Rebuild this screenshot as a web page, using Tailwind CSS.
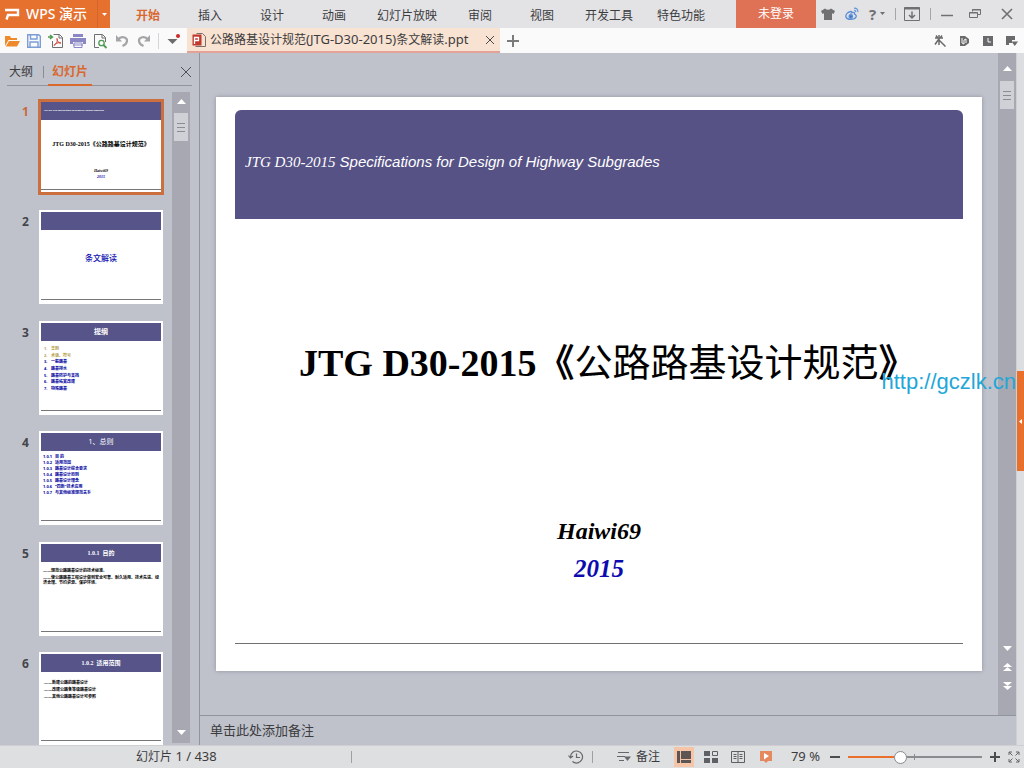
<!DOCTYPE html>
<html lang="zh-CN">
  <head>
    <meta charset="UTF-8" />
    <meta name="viewport" content="width=device-width, initial-scale=1.0" />
    <title>WPS 演示</title>
    <script src="https://cdn.jsdelivr.net/npm/@tailwindcss/browser@4"></script>
  </head>
  <body
    class="flex h-screen flex-col overflow-hidden bg-[#bfc2cb] font-['Noto_Sans','Noto_Sans_CJK_SC',sans-serif] text-xs text-[#3c3c3e]"
  >
    <!-- Title bar -->
    <header class="flex h-7 shrink-0 bg-[#e3e3e6]">
      <button class="flex w-[110px] shrink-0 items-center bg-[#e6702e] text-white">
        <svg class="ml-1 h-5 w-5 shrink-0" viewBox="0 0 20 20" fill="none" stroke="#fff" stroke-width="2.400"><path d="M1 6h13v5H4L2.500 15.500" /></svg>
        <span class="ml-0.5 flex-1 text-left text-sm font-medium whitespace-nowrap">WPS 演示</span>
        <span class="flex h-full w-[13px] items-center justify-center border-l border-[#d8662a]">
          <svg class="h-[3px] w-[5px]" viewBox="0 0 5 3" fill="#fff"><path d="M0 0h5L2.500 3z" /></svg>
        </span>
      </button>
      <nav class="ml-[7px] flex flex-1 items-center pt-1">
        <a href="#" class="min-w-[62px] px-3 text-center font-bold whitespace-nowrap text-[#d9682f]">开始</a>
        <a href="#" class="min-w-[62px] px-3 text-center whitespace-nowrap">插入</a>
        <a href="#" class="min-w-[62px] px-3 text-center whitespace-nowrap">设计</a>
        <a href="#" class="min-w-[62px] px-3 text-center whitespace-nowrap">动画</a>
        <a href="#" class="min-w-[62px] px-3 text-center whitespace-nowrap">幻灯片放映</a>
        <a href="#" class="min-w-[62px] px-3 text-center whitespace-nowrap">审阅</a>
        <a href="#" class="min-w-[62px] px-3 text-center whitespace-nowrap">视图</a>
        <a href="#" class="min-w-[62px] px-3 text-center whitespace-nowrap">开发工具</a>
        <a href="#" class="min-w-[62px] px-3 text-center whitespace-nowrap">特色功能</a>
      </nav>
      <button class="w-20 shrink-0 bg-[#df7254] text-white">未登录</button>
      <div class="flex w-52 shrink-0 items-center text-[#707072]">
        <button class="ml-[5px]" aria-label="皮肤">
          <svg class="h-3.5 w-3.5" viewBox="0 0 14 14" fill="currentColor"><path d="M4 1.500q3 2.500 6 0L14 4l-1.500 3L11 6.300V13H3V6.300L1.500 7 0 4z" /></svg>
        </button>
        <button class="ml-2.5" aria-label="微博">
          <svg class="h-3.5 w-3.5" viewBox="0 0 14 14" fill="none" stroke="#5d8fd6" stroke-width="1.400"><path d="M5.500 4.500C2 5.500.5 8 1 10c.8 3 8.500 3.200 10 0 .7-1.700-.6-2.500-1.500-2.800.5-2-1-2.200-3-1.400.3-.9.200-1.800-1-1.300z" /><circle cx="5.800" cy="9.500" r="1.700" fill="#3f76c8" /><path d="M9 1.200c2.500-.4 4.300 1.500 3.900 4M9.200 3.400c1.200-.1 1.800.6 1.600 1.700" stroke-width="1.100" /></svg>
        </button>
        <button class="ml-2.5 flex items-center gap-1" aria-label="帮助">
          <span class="text-[15px] font-bold">?</span>
          <svg class="h-[3px] w-[5px]" viewBox="0 0 5 3" fill="currentColor"><path d="M0 0h5L2.500 3z" /></svg>
        </button>
        <span class="ml-2.5 h-3 w-px bg-[#a5a5a8]"></span>
        <button class="ml-2" aria-label="隐藏功能区">
          <svg class="h-4 w-4" viewBox="0 0 16 16" fill="none" stroke="currentColor"><path d="M.5 1.500h15v13H.5z" /><path d="M0 2.500h16" stroke-width="2" /><path d="M8 5.500V12M5 9l3 3 3-3" stroke-width="1.500" /></svg>
        </button>
        <span class="ml-2.5 h-3 w-px bg-[#a5a5a8]"></span>
        <button class="ml-2.5" aria-label="最小化">
          <svg class="h-3 w-3" viewBox="0 0 12 12" stroke="currentColor" stroke-width="1.500"><path d="M0 7.500h12" /></svg>
        </button>
        <button class="ml-4" aria-label="还原">
          <svg class="h-3 w-3" viewBox="0 0 12 12" fill="none" stroke="currentColor"><path d="M3.500 3.500v-2h8v5h-3M.5 4.500h8v5h-8zM3 2h9M0 5h9" /></svg>
        </button>
        <button class="ml-5" aria-label="关闭">
          <svg class="h-3 w-3" viewBox="0 0 12 12" stroke="currentColor" stroke-width="1.600"><path d="M1 1l10 10M11 1L1 11" /></svg>
        </button>
      </div>
    </header>

    <!-- Quick access + document tabs -->
    <div class="flex h-[25px] shrink-0 items-center bg-[#fafafa]">
      <div class="flex w-[187px] shrink-0 items-center gap-[6px] pl-1">
        <button aria-label="打开">
          <svg class="h-4 w-4" viewBox="0 0 16 16" fill="#ee8a2c"><path d="M1 13V3h5l1 2h6v2H4.500z" /><path d="M5 8h11l-3 5.500H1.800z" /></svg>
        </button>
        <button aria-label="保存">
          <svg class="h-4 w-4" viewBox="0 0 16 16" fill="none" stroke="#7b9cd6" stroke-width="1.400"><path d="M1.700 1.700h11l1.600 1.600v11H1.700zM4.500 2v4h6.500V2M4 14V9h8v5" /></svg>
        </button>
        <button aria-label="输出为PDF">
          <svg class="h-4 w-4" viewBox="0 0 16 16" fill="none"><path d="M5.500 1.500h6l3 3v10h-10V8" stroke="#6f6f72" /><path d="M11 1.500V5h3.500" stroke="#6f6f72" /><path d="M9 5.500c1 3-.8 5.500-3 7 1-2 4-3.500 7-2.500-2.500.3-4-2-4-4.500z" stroke="#d04338" /><path d="M0 4h4M2 2l2.500 2L2 6" stroke="#4c9a50" stroke-width="1.400" /></svg>
        </button>
        <button aria-label="打印">
          <svg class="h-4 w-4" viewBox="0 0 16 16" fill="#8b87c4"><path d="M3 1h10v3H3zM0 5h16v6h-3V9H3v2H0z" /><path d="M4 10h8v4.500H4z" fill="#fff" stroke="#8b87c4" /><path d="M3 12h10" stroke="#8b87c4" /></svg>
        </button>
        <button aria-label="打印预览">
          <svg class="h-4 w-4" viewBox="0 0 16 16" fill="none"><path d="M7 14.500H2.500v-13h8l3 3V9M10 1.500V5h3.500" stroke="#6f6f72" /><circle cx="9.500" cy="10" r="2.700" stroke="#4f9a55" stroke-width="1.300" /><path d="M11.500 12l3 3" stroke="#4f9a55" stroke-width="1.800" /></svg>
        </button>
        <button aria-label="撤销">
          <svg class="h-4 w-4" viewBox="0 0 16 16" fill="none" stroke="#a5a5a8" stroke-width="2.200"><path d="M4 6.500c3-4 9.500-2.500 9 1.500-.3 2.500-2 4-4.500 5" /><path d="M2 2v6.500h6z" fill="#a5a5a8" stroke="none" /></svg>
        </button>
        <button aria-label="恢复">
          <svg class="h-4 w-4" viewBox="0 0 16 16" fill="none" stroke="#a5a5a8" stroke-width="2.200"><path d="M12 6.500c-3-4-9.500-2.500-9 1.500.3 2.500 2 4 4.500 5" /><path d="M14 2v6.500H8z" fill="#a5a5a8" stroke="none" /></svg>
        </button>
        <span class="h-4 w-px bg-[#d5d5d8]"></span>
        <button aria-label="自定义快速访问工具栏">
          <svg class="h-4 w-4" viewBox="0 0 16 16"><path d="M2.500 6h10L7.500 11z" fill="#6c6c6e" /><circle cx="13" cy="3" r="2" fill="#c92a2a" /></svg>
        </button>
      </div>
      <div class="flex h-full w-[313px] shrink-0 items-center border-b-2 border-[#e2a297] bg-[#f8e2d2]">
        <svg class="ml-1 h-4 w-4 shrink-0" viewBox="0 0 16 16" fill="none"><path d="M5.500 1.500h6l3 3v10h-10" stroke="#7a6f6c" /><path d="M1.500 2.500h9v11h-9z" fill="#c0392f" /><path d="M3.500 12V5.500h4v3H4" stroke="#fff" stroke-width="1.300" /></svg>
        <span class="ml-[3px] flex-1 whitespace-nowrap">公路路基设计规范<span class="text-[13px]">(JTG-D30-2015)</span>条文解读<span class="text-[13px]">.ppt</span></span>
        <button class="mr-1.5" aria-label="关闭文档">
          <svg class="h-2 w-2" viewBox="0 0 8 8" stroke="#4a4a4c"><path d="M0 0l8 8M8 0L0 8" /></svg>
        </button>
      </div>
      <button class="ml-[7px]" aria-label="新建">
        <svg class="h-3 w-3" viewBox="0 0 12 12" stroke="#7b7b7e" stroke-width="2"><path d="M6 0v12M0 6h12" /></svg>
      </button>
      <div class="ml-auto flex items-center gap-3 pr-1.5 text-[#6a6a6d]">
        <button aria-label="动画"><svg class="h-3 w-3" viewBox="0 0 12 12" fill="none" stroke="currentColor" stroke-width="1.500"><path d="M5 0v6M1 3h8M4.500 4.500L1 9.500M2 .5l1.500 2M8 .5L6.500 2.500M5 5l6.500 6.500M5 6v4" /></svg></button>
        <button aria-label="文档"><svg class="h-3 w-3" viewBox="0 0 12 12"><path d="M2 1h5l4 3v4L7 11H2z" fill="currentColor" /><path d="M4 3v5l2 1V5l2-1v4" stroke="#fafafa" fill="none" /></svg></button>
        <button aria-label="历史"><svg class="h-3 w-3" viewBox="0 0 12 12"><path d="M1 1h10v10H1z" fill="currentColor" /><path d="M6 3v4h3" stroke="#fafafa" fill="none" /></svg></button>
        <button aria-label="更多"><svg class="h-3 w-3" viewBox="0 0 12 12" fill="currentColor"><path d="M0 1h9v4H6v3H3v2H0zM5.500 6.500H12L8.800 11z" /></svg></button>
      </div>
    </div>

    <main class="flex min-h-0 flex-1">
      <!-- Slide panel -->
      <aside class="flex w-[200px] shrink-0 flex-col border-r border-[#92949c]">
        <div class="mr-[7px] ml-[7px] flex h-[33px] shrink-0 items-center border-b border-[#92949c]">
          <a href="#" class="px-0.5 pt-1.5">大纲</a>
          <span class="mt-1.5 ml-2 h-3 w-px bg-[#8a8c94]"></span>
          <a href="#" class="-mb-px ml-1 flex h-[33px] items-center border-b-2 border-[#d9682f] px-1 pt-1.5 font-bold text-[#d9682f]">幻灯片</a>
          <button class="mt-1.5 mr-px ml-auto" aria-label="关闭窗格">
            <svg class="h-2.5 w-2.5" viewBox="0 0 10 10" stroke="#4f5056"><path d="M0 0l10 10M10 0L0 10" /></svg>
          </button>
        </div>
        <div class="flex min-h-0 flex-1 pt-[6px]">
          <ol class="min-h-0 flex-1 overflow-hidden pt-2 text-[#45464b]">
            <li class="flex odd:h-[110px] even:h-[111px]">
              <span class="w-[39px] pt-1 pl-[22px] font-bold text-[#c96a3c]">1</span>
              <div class="flex h-[94px] w-[124px] flex-col bg-white p-0.5 outline-3 -outline-offset-2 outline-[#cb6f3f]">
                <div class="h-[18px] shrink-0 bg-[#565488] px-[3px] pt-1.5 font-['Liberation_Sans',sans-serif] text-[2px] leading-[4px] font-bold text-white italic">JTG D30-2015 Specifications for Design of Highway Subgrades</div>
                <p class="mt-5 text-center font-['Liberation_Serif','Noto_Sans_CJK_SC',serif] text-[6px] leading-[8px] font-bold whitespace-nowrap text-black">JTG D30-2015《公路路基设计规范》</p>
                <p class="mt-5 text-center font-['Liberation_Serif',serif] text-[4px] leading-[6px] font-bold text-black italic">Haiwi69</p>
                <p class="text-center font-['Liberation_Serif',serif] text-[4px] leading-[6px] font-bold text-[#0e0eb0] italic">2015</p>
                <div class="mt-auto mb-0.5 h-px bg-[#77777a]"></div>
              </div>
            </li>
            <li class="flex odd:h-[110px] even:h-[111px]">
              <span class="w-[39px] pt-1 pl-[22px] font-bold">2</span>
              <div class="flex h-[94px] w-[124px] flex-col bg-white p-0.5">
                <div class="h-[18px] shrink-0 bg-[#565488]"></div>
                <p class="mt-[22px] text-center text-[8px] leading-[12px] font-medium text-[#0e0eb0]">条文解读</p>
                <div class="mt-auto mb-0.5 h-px bg-[#77777a]"></div>
              </div>
            </li>
            <li class="flex odd:h-[110px] even:h-[111px]">
              <span class="w-[39px] pt-1 pl-[22px] font-bold">3</span>
              <div class="flex h-[94px] w-[124px] flex-col bg-white p-0.5">
                <div class="h-[18px] shrink-0 bg-[#565488] text-center text-[7px] leading-[18px] font-bold text-white">提纲</div>
                <div class="mt-[5px] flex h-[46px] flex-col justify-between pl-[3px] text-[4px] leading-[6px] font-bold text-[#0000a0]">
                  <p class="flex text-[#b59b4a]"><span class="w-[7px]">1.</span>总则</p>
                  <p class="flex text-[#b59b4a]"><span class="w-[7px]">2.</span>术语、符号</p>
                  <p class="flex"><span class="w-[7px]">3.</span>一般路基</p>
                  <p class="flex"><span class="w-[7px]">4.</span>路基排水</p>
                  <p class="flex"><span class="w-[7px]">5.</span>路基防护与支挡</p>
                  <p class="flex"><span class="w-[7px]">6.</span>路基拓宽改建</p>
                  <p class="flex"><span class="w-[7px]">7.</span>特殊路基</p>
                </div>
                <div class="mt-auto mb-0.5 h-px bg-[#77777a]"></div>
              </div>
            </li>
            <li class="flex odd:h-[110px] even:h-[111px]">
              <span class="w-[39px] pt-1 pl-[22px] font-bold">4</span>
              <div class="flex h-[94px] w-[124px] flex-col bg-white p-0.5">
                <div class="h-[18px] shrink-0 bg-[#565488] text-center text-[7px] leading-[18px] text-white">1、总则</div>
                <div class="mt-[3px] flex flex-col pl-0.5 text-[4px] leading-[6px] font-bold text-[#0000a0]">
                  <p class="flex"><span class="w-3">1.0.1</span>目 的</p>
                  <p class="flex"><span class="w-3">1.0.2</span>适用范围</p>
                  <p class="flex"><span class="w-3">1.0.3</span>路基设计综合要求</p>
                  <p class="flex"><span class="w-3">1.0.4</span>路基设计原则</p>
                  <p class="flex"><span class="w-3">1.0.5</span>路基设计理念</p>
                  <p class="flex"><span class="w-3">1.0.6</span>“四新”技术应用</p>
                  <p class="flex"><span class="w-3">1.0.7</span>与其他标准规范关系</p>
                </div>
                <div class="mt-auto mb-0.5 h-px bg-[#77777a]"></div>
              </div>
            </li>
            <li class="flex odd:h-[110px] even:h-[111px]">
              <span class="w-[39px] pt-1 pl-[22px] font-bold">5</span>
              <div class="flex h-[94px] w-[124px] flex-col bg-white p-0.5">
                <div class="h-[18px] shrink-0 bg-[#565488] text-center font-['Liberation_Serif','Noto_Sans_CJK_SC',serif] text-[6px] leading-[18px] font-bold text-white">1.0.1&nbsp; 目的</div>
                <div class="mt-[6px] px-0.5 text-[4px] leading-[5px] font-bold text-black">
                  <p class="mb-0.5">——规范公路路基设计的技术标准。</p>
                  <p>——使公路路基工程设计做到安全可靠、耐久适用、技术先进、经济合理、节约资源、保护环境。</p>
                </div>
                <div class="mt-auto mb-0.5 h-px bg-[#77777a]"></div>
              </div>
            </li>
            <li class="flex odd:h-[110px] even:h-[111px]">
              <span class="w-[39px] pt-1 pl-[22px] font-bold">6</span>
              <div class="flex h-[94px] w-[124px] flex-col bg-white p-0.5">
                <div class="h-[18px] shrink-0 bg-[#565488] text-center font-['Liberation_Serif','Noto_Sans_CJK_SC',serif] text-[6px] leading-[18px] font-bold text-white">1.0.2&nbsp; 适用范围</div>
                <div class="mt-[7px] px-[3px] text-[4px] leading-[7px] font-bold text-black">
                  <p>——新建公路的路基设计</p>
                  <p>——改建公路各等级路基设计</p>
                  <p>——其他公路路基设计可参照</p>
                </div>
                <div class="mt-auto mb-[3px] h-px bg-[#77777a]"></div>
              </div>
            </li>
          </ol>
          <div class="mr-[9px] mb-0.5 flex w-[18px] shrink-0 flex-col items-center bg-[#a8a8b2]">
            <svg class="mt-[7px] h-[5px] w-[9px]" viewBox="0 0 9 5" fill="#fff"><path d="M0 5L4.500 0 9 5z" /></svg>
            <div class="mt-[9px] flex h-7 w-3.5 flex-col items-center justify-center gap-[3px] bg-[#d0d1d6]">
              <span class="h-px w-2 bg-[#8b8c92]"></span><span class="h-px w-2 bg-[#8b8c92]"></span><span class="h-px w-2 bg-[#8b8c92]"></span>
            </div>
            <svg class="mt-auto mb-2 h-[5px] w-[9px]" viewBox="0 0 9 5" fill="#fff"><path d="M0 0h9L4.500 5z" /></svg>
          </div>
        </div>
      </aside>

      <!-- Editing area -->
      <section class="flex min-w-0 flex-1 flex-col">
        <div class="flex min-h-0 flex-1">
          <div class="relative min-w-0 flex-1 px-4 py-11">
            <article class="flex h-full flex-col bg-white px-[19px] pt-[13px] pb-[27px] shadow-[0_0_4px_#8f919a]">
              <div class="h-[109px] shrink-0 rounded-t-md bg-[#565286] px-2.5 pt-10 font-['Liberation_Sans',sans-serif] text-[15px] leading-6 text-white italic">
                <span class="font-['Liberation_Serif',serif]">JTG D30-2015</span> Specifications for Design of Highway Subgrades
              </div>
              <h1 class="mt-[121px] pl-16 font-['Liberation_Serif','Noto_Sans_CJK_SC',serif] text-[38px] leading-[46px] font-bold whitespace-nowrap text-black">JTG D30-2015《<span class="font-normal">公路路基设计规范</span>》</h1>
              <p class="mt-[131px] text-center font-['Liberation_Serif',serif] text-2xl leading-7 font-bold text-black italic">Haiwi69</p>
              <p class="mt-2 text-center font-['Liberation_Serif',serif] text-[25px] leading-8 font-bold text-[#0b0bb0] italic">2015</p>
              <div class="mt-auto h-px bg-[#707072]"></div>
            </article>
            <!-- Watermark -->
            <span class="absolute top-[317px] -right-[18px] z-10 font-['Liberation_Sans',sans-serif] text-[22px] leading-6 whitespace-nowrap text-[#22a7d8]">http://gczlk.cn</span>
          </div>
          <div class="flex w-[18px] shrink-0 flex-col items-center bg-[#a8a8b2]">
            <svg class="mt-[13px] h-[5px] w-[9px]" viewBox="0 0 9 5" fill="#fff"><path d="M0 5L4.500 0 9 5z" /></svg>
            <div class="mt-[10px] flex h-7 w-3.5 flex-col items-center justify-center gap-[3px] bg-[#d0d1d6]">
              <span class="h-px w-2 bg-[#8b8c92]"></span><span class="h-px w-2 bg-[#8b8c92]"></span><span class="h-px w-2 bg-[#8b8c92]"></span>
            </div>
            <svg class="mt-auto h-[5px] w-[9px]" viewBox="0 0 9 5" fill="#fff"><path d="M0 0h9L4.500 5z" /></svg>
            <svg class="mt-3 h-2 w-[9px]" viewBox="0 0 9 8" fill="#fff"><path d="M0 4L4.500 0 9 4zM0 8l4.500-4L9 8z" /></svg>
            <svg class="mt-[11px] mb-[25px] h-2 w-[9px]" viewBox="0 0 9 8" fill="#fff"><path d="M0 0h9L4.500 4zM0 4h9L4.500 8z" /></svg>
          </div>
        </div>
        <div class="flex h-[30px] shrink-0 items-center border-t border-[#92949c] px-2.5 text-[13px]">单击此处添加备注</div>
      </section>

      <!-- Task pane handle -->
      <div class="flex w-2 shrink-0 flex-col justify-center border-l border-[#cfcfd2] bg-[#dcdde0]">
        <button class="mt-11 flex h-[100px] items-center justify-center bg-[#e8702c]" aria-label="展开任务窗格">
          <svg class="h-[5px] w-[3px]" viewBox="0 0 3 5" fill="#fff"><path d="M3 0v5L0 2.500z" /></svg>
        </button>
      </div>
    </main>

    <!-- Status bar -->
    <footer class="flex h-[23px] shrink-0 items-center border-t border-[#cfcfd3] bg-[#dedfe0]">
      <span class="w-[215px] pl-[136px] whitespace-nowrap">幻灯片<span class="text-[13px]"> 1 / 438</span></span>
      <span class="ml-[136px] h-3 w-px bg-[#a0a0a3]"></span>
      <div class="ml-auto flex items-center text-[#66676a]">
        <button aria-label="历史版本">
          <svg class="h-4 w-4" viewBox="0 0 16 16" fill="none" stroke="currentColor" stroke-width="1.200"><path d="M2.500 8a6 6 0 1 1 2 4.500M8.500 4.500V8.500H12M.5 6.500l2 2.500 2.500-2" /></svg>
        </button>
        <span class="ml-2 h-3 w-px bg-[#a0a0a3]"></span>
        <button class="ml-[23px] flex items-center gap-1 whitespace-nowrap text-[#3c3c3e]">
          <svg class="h-4 w-4" viewBox="0 0 16 16" fill="none" stroke="#66676a"><path d="M2 3.500h11M1 7.500h8M3 11.500h5" /><path d="M8 7.500h7L11.500 12z" fill="#66676a" stroke="none" /></svg>备注
        </button>
        <button class="ml-3.5 flex h-5 w-5 items-center justify-center bg-[#f6c4a6]" aria-label="普通视图">
          <svg class="h-3.5 w-3.5" viewBox="0 0 14 14" fill="#5c5553"><path d="M0 1h3v12H0zM4 1h10v8H4zM4 10h10v3H4z" /></svg>
        </button>
        <button class="ml-2.5" aria-label="幻灯片浏览"><svg class="h-3.5 w-3.5" viewBox="0 0 14 14" fill="#5f6063"><path d="M0 1h6v5H0zM0 8h6v5H0zM8 8h6v5H8z" /><path d="M8.500 1.500h5v4h-5z" fill="none" stroke="#5f6063" /></svg></button>
        <button class="ml-[13px]" aria-label="阅读视图"><svg class="h-3.5 w-3.5" viewBox="0 0 14 14" fill="none" stroke="#5f6063"><path d="M.5 1.500h13v11H.5zM7 1.500V13M2.500 4.500h3M2.500 6.500h3M2.500 8.500h3M8.500 4.500h3M8.500 6.500h3M8.500 8.500h3" /></svg></button>
        <button class="ml-3.5" aria-label="放映"><svg class="h-3.5 w-3.5" viewBox="0 0 14 14"><path d="M1 1h12v10H9l-2 2-2-2H1z" fill="#e58a5e" /><path d="M5 3l5 3-5 3.500z" fill="#fff" /></svg></button>
        <span class="ml-[18px] text-[13px] whitespace-nowrap text-[#3c3c3e]">79 %</span>
        <button class="ml-2.5" aria-label="缩小"><svg class="h-2.5 w-2.5" viewBox="0 0 10 10" stroke="#4c4d50" stroke-width="2"><path d="M0 5h10" /></svg></button>
        <label class="relative mx-2 flex h-4 w-[134px] items-center">
          <span class="h-0.5 w-[52px] bg-[#e8702c]"></span>
          <span class="h-0.5 flex-1 bg-[#8a8b8e]"></span>
          <span class="absolute left-[66px] h-1.5 w-px bg-[#8a8b8e]"></span>
          <input
            type="range"
            min="10"
            max="190"
            value="79"
            aria-label="显示比例"
            class="absolute inset-0 w-full appearance-none bg-transparent [&::-webkit-slider-thumb]:h-[13px] [&::-webkit-slider-thumb]:w-[13px] [&::-webkit-slider-thumb]:appearance-none [&::-webkit-slider-thumb]:rounded-full [&::-webkit-slider-thumb]:border [&::-webkit-slider-thumb]:border-[#8a8b8e] [&::-webkit-slider-thumb]:bg-white"
          />
        </label>
        <button aria-label="放大"><svg class="h-2.5 w-2.5" viewBox="0 0 10 10" stroke="#4c4d50" stroke-width="2"><path d="M0 5h10M5 0v10" /></svg></button>
        <button class="mr-1 ml-2" aria-label="适应窗口"><svg class="h-3 w-3" viewBox="0 0 12 12" fill="none" stroke="#66676a"><path d="M1 4V1h3M8 1h3v3M11 8v3H8M4 11H1V8M1 1l3.500 3.500M11 1L7.500 4.500M11 11L7.500 7.500M1 11l3.500-3.500" /></svg></button>
      </div>
    </footer>
  </body>
</html>
